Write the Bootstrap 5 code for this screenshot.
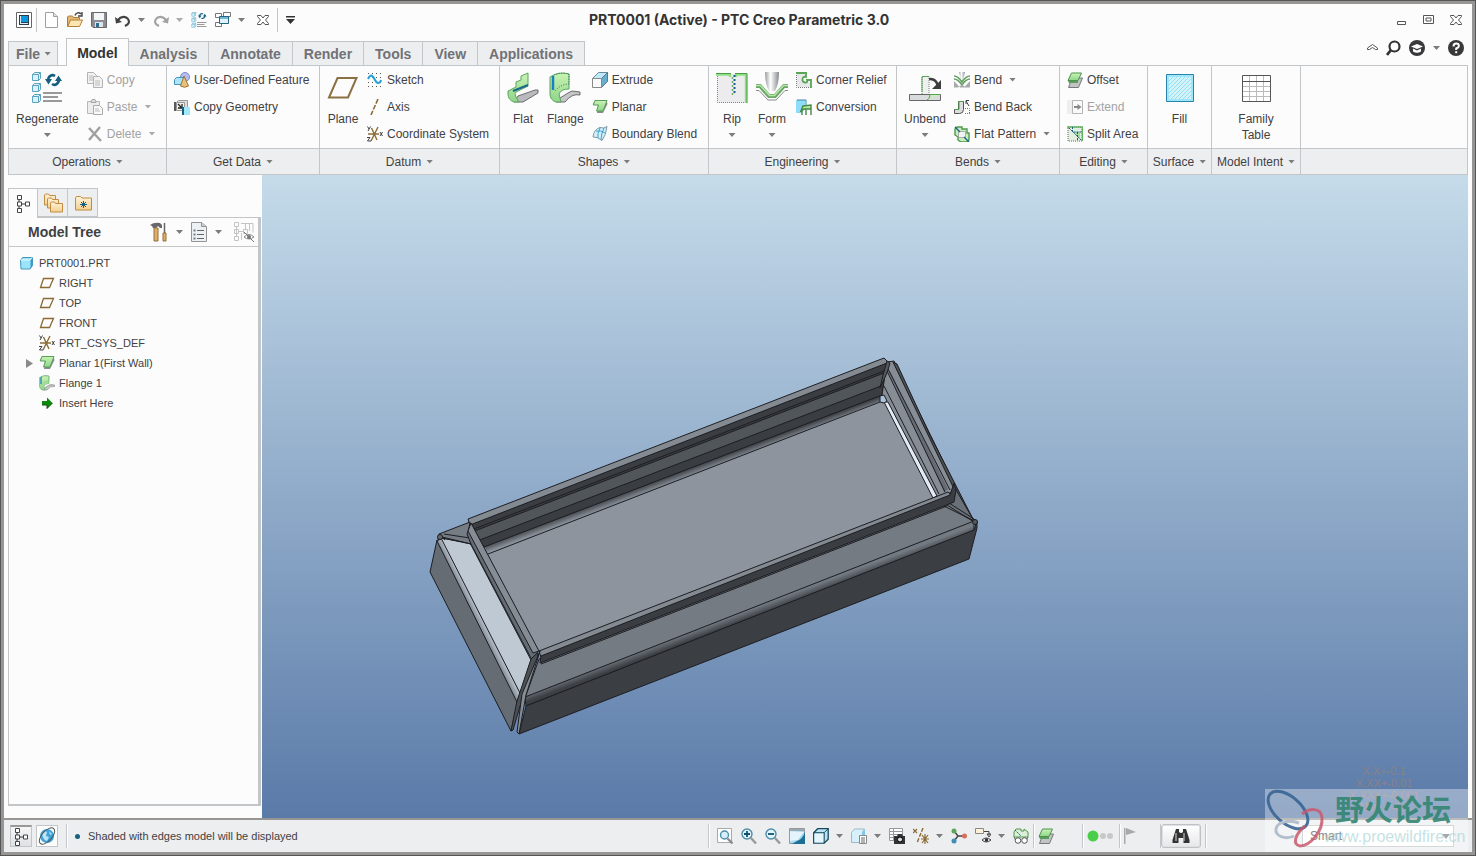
<!DOCTYPE html>
<html lang="en">
<head>
<meta charset="utf-8">
<meta name="viewport" content="width=device-width, initial-scale=1">
<title>PRT0001 (Active) - PTC Creo Parametric 3.0</title>
<link rel="stylesheet" href="https://cdn.jsdelivr.net/npm/bootstrap@5.3.0/dist/css/bootstrap.min.css">
<script src="https://cdn.jsdelivr.net/npm/bootstrap@5.3.0/dist/js/bootstrap.bundle.min.js"></script>
<style>
:root{--line:#c3c6c9;--pane:#edeef0;--ink:#414143;--paper:#fcfcfc}
body{font:12px/16px "Liberation Sans",Arial,sans-serif;color:var(--ink);background:var(--paper);border:1px solid #555;overflow:hidden}
.frame{border:3px solid #989694;min-height:0}
svg{display:block;flex:none}
button{border:0;background:none;padding:0;color:inherit;font:inherit}
.dn{width:7px;height:4px;background:#7c7c7c;clip-path:polygon(0 0,100% 0,50% 100%);flex:none}
.off{color:#a2a2a2}.off .dn{background:#aaa}
.heavy{font:700 14px/16px "Liberation Sans",Arial,sans-serif}
.doc-title{font:700 14px/16px Inter,"Liberation Sans",sans-serif;color:#333}
.titlebar{display:grid;grid-template-columns:1fr auto 1fr;height:34px;align-items:center;padding:0 10px 2px 12px}
.drop{gap:7px}
.vr-line{width:1px;height:24px;background:var(--line);flex:none}
.tabs{height:28px;padding:0 8px 0 4px;margin-bottom:-1px;position:relative;z-index:1}
.rtab{height:25px;padding:0 11px;background:var(--pane);border:solid var(--line);border-width:1px 0 1px 1px;color:#717276}
.rtab:last-child{border-right-width:1px}
.rtab.current{height:28px;padding:0 10px;background:var(--paper);border-width:1px 1px 0;color:#333;border-radius:1px}
.rtab.current+.rtab{border-left:0}
.file-tab{height:25px;padding:0 6px 0 7px;background:var(--pane);border:1px solid var(--line);color:#717276;margin-right:8px}
.ribbon{margin:0 4px;border:1px solid var(--line);display:grid;grid-template-columns:158px 153px 180px 209px 188px 163px 88px 64px 89px 1fr}
.grp{border-right:1px solid var(--line)}
.grp:last-child{border-right:0}
.grp-body{height:82px;padding-left:7px;gap:8px}
.grp-name{height:26px;border-top:1px solid var(--line);background:var(--pane);gap:5px}
.big{padding-top:6px;min-width:31px;gap:7px}
.big .dn{margin-top:-1px}
.cmd{height:27px;gap:4px;white-space:nowrap}
.cmd .dn{margin-left:3px}
.side{width:258px;padding:13px 1px 12px 4px}
.stab{width:30px;height:29px;background:var(--pane);border:1px solid var(--line);border-left-width:0}
.stab.current{height:30px;background:var(--paper);border-width:1px 1px 0}
.sidepanel{border:1px solid var(--line);border-right-width:3px;border-bottom-width:2px;margin-top:-1px}
.sidehead{height:29px;border-bottom:1px solid var(--line);padding:0 4px 0 19px}
.tree{font-size:11px;line-height:20px;padding:6px 0 0 10px}
.tree button{height:20px;gap:4px;white-space:nowrap}
.tree .kid{padding-left:20px}
.twist{width:20px}
.main-row{min-height:0}
.view{background:linear-gradient(#c5dbea,#5a7aa8);margin-right:4px;min-width:0}
.foot{height:34px;border-top:2px solid #989694;background:var(--pane);padding:0 18px 0 6px}
.foot .vr-line{box-shadow:1px 0 #fff}
.msg{font-size:11px}
.tog{width:22px;height:22px;border:1px solid var(--line);background:var(--paper)}
.tog.on{border-top:2px solid #999;background:linear-gradient(#f6f6f7,#dfe0e3)}
.tools{gap:8px}
.find{width:40px;height:24px;border:1px solid #bfc1c4;border-radius:3px;background:linear-gradient(#fff,#e6e7e9);box-shadow:0 0 0 1px #dfe0e2 inset}
.pick{width:152px;height:22px;border:1px solid #bfc1c4;border-radius:0;padding:0 20px 0 7px;font-size:12px;line-height:20px;color:var(--ink);background-color:#fff;background-position:right 3px center;background-size:8px 5px;--bs-form-select-bg-img:url("data:image/svg+xml,%3csvg xmlns='http://www.w3.org/2000/svg' viewBox='0 0 8 5'%3e%3cpath d='M0 0h8L4 5z' fill='%23777'/%3e%3c/svg%3e");margin-left:96px}
.stamp{position:absolute;right:4px;bottom:0;width:203px;height:63px;background:rgba(255,255,255,.36);pointer-events:none}
.stamp svg{position:absolute;left:0;top:0}
.stamp-cn{position:absolute;left:70px;top:1px;font:700 29px/36px "Noto Sans CJK SC",sans-serif;color:#338674;white-space:nowrap;opacity:.9}
.stamp-url{position:absolute;left:59px;top:38px;font:16px/20px "Liberation Sans",sans-serif;color:#9fd0d0;white-space:nowrap;opacity:.6}
.tol{font:11px/12px "Liberation Sans",sans-serif;fill:#8c8084;text-anchor:middle}
</style>
</head>
<body class="vh-100 d-flex flex-column m-0">
<svg width="0" height="0" class="position-absolute" aria-hidden="true">
<defs>
<linearGradient id="gBlue" x2="1" y2="1"><stop stop-color="#e6f8ff"/><stop offset="1" stop-color="#6fc0e4"/></linearGradient>
<linearGradient id="gGreen" x2="0" y2="1"><stop stop-color="#c9f3b4"/><stop offset="1" stop-color="#8fd588"/></linearGradient>
<linearGradient id="gSteel" x2="1" y2="0"><stop stop-color="#9a9ca0"/><stop offset=".4" stop-color="#fff"/><stop offset="1" stop-color="#888a90"/></linearGradient>
<linearGradient id="gFold" x2="0" y2="1"><stop stop-color="#fff3d8"/><stop offset="1" stop-color="#f3cf91"/></linearGradient>
</defs>
<symbol id="app" viewBox="0 0 16 16"><path d="M.5.500h15v15H.5z" fill="#fff" stroke="#666"/><path d="M3 3h10v10H3z" fill="#2a3d4c"/><path d="M5 4h7v6H5z" fill="#0a99dc"/><path d="M4 4h1v8H4zM5 11h7v1H5z" fill="#d7eefa"/></symbol>
<symbol id="new" viewBox="0 0 14 16"><path d="M.5.5h8l4 4v11H.5z" fill="#fff" stroke="#9aa0a4"/><path d="M8.500.5v4h4" fill="#ddd" stroke="#9aa0a4"/></symbol>
<symbol id="open" viewBox="0 0 16 16"><path d="M.5 14.500V5l1-1h4l1 1.500h6v2" fill="#e2b877" stroke="#a87c3c"/><path d="M3.500 8h12l-3 6.500H.8z" fill="#ffe5b0" stroke="#b1803a"/><path d="M8 3.500C9 .5 12 0 14 2M15 0v4h-4" fill="none" stroke="#444" stroke-width="1.400"/></symbol>
<symbol id="save" viewBox="0 0 16 16"><path d="M.5.5h15v15H2l-1.500-1.500z" fill="#8b8d90" stroke="#66686b"/><path d="M3 1h10v7H3z" fill="#f4f5f6"/><path d="M4 10h8v5H4z" fill="#dfe4e8"/><path d="M5 11h3v4H5z" fill="#2b6f93"/></symbol>
<symbol id="undo" viewBox="0 0 16 16"><path d="M3 8C6 4 11 4 13 7s1 5-3 7" fill="none" stroke="currentColor" stroke-width="2.200"/><path d="M0 5l1 6.500L7 10z" fill="currentColor"/></symbol>
<symbol id="redo" viewBox="0 0 16 16"><path d="M13 8C10 4 5 4 3 7s-1 5 3 7" fill="none" stroke="currentColor" stroke-width="2.200"/><path d="M16 5l-1 6.500L9 10z" fill="currentColor"/></symbol>
<symbol id="regen" viewBox="0 0 32 32"><g stroke="#5ba3c0"><path d="M1.500 2.500h6v6h-6zM1.500 2.500l2-2h6v6l-2 2M7.500 2.500l2-2" fill="#d8f3fd"/><path d="M1.500 13.500h6v6h-6zM1.500 13.500l2-2h6v6l-2 2M7.500 13.500l2-2" fill="#d8f3fd"/><path d="M1.500 24.500h6v6h-6zM1.500 24.500l2-2h6v6l-2 2M7.500 24.500l2-2" fill="#d8f3fd"/></g><path d="M12 21h19M12 25h15M12 29h19" stroke="#999" stroke-width="2"/><path d="M17 9c0-5 4-7 7-5M28 7c0 5-4 7-7 5" fill="none" stroke="#156080" stroke-width="2.600"/><path d="M14 7h7l-3.500 5.500zM24 9h7l-3.500-5.500z" fill="#156080"/></symbol>
<symbol id="wins" viewBox="0 0 16 16"><g fill="#fff" stroke="#777"><path d="M.5 1.500h6v4h-6zM8.500.5h7v4h-7zM.5 10.500h6v4h-6z"/><path d="M4.500 4.500h9v7h-9z" fill="#dff3fb" stroke="#28637f"/></g><path d="M5 5h8v2H5z" fill="#6fb8d8"/></symbol>
<symbol id="x" viewBox="0 0 12 12"><path d="M.5 1.500h3.500l2 2.500 2-2.500h3.500v1L8.500 6l3 3.500v1H8L6 8l-2 2.500H.5v-1L3.500 6l-3-3.500z" fill="#fff" stroke="#555"/></symbol>
<symbol id="copy" viewBox="0 0 16 16"><g fill="#f2f2f2" stroke="#b3b3b3"><path d="M.5.5h6l3 3v8h-9z"/><path d="M6.500 4.500h6l3 3v8h-9z"/></g><path d="M2 4h4M2 6h4M2 8h4M8 9h5M8 11h5M8 13h5" stroke="#bbb"/></symbol>
<symbol id="paste" viewBox="0 0 16 16"><path d="M.5 2.500h12v12H.5z" fill="#ededed" stroke="#b8b8b8"/><path d="M4 3.500l1-3h3l1 3z" fill="#ddd" stroke="#aaa"/><path d="M6.500 6.500h6l3 3v6h-9z" fill="#fafafa" stroke="#aaa"/><path d="M8 10h4M8 12h5" stroke="#bbb"/></symbol>
<symbol id="del" viewBox="0 0 16 16"><path d="M2 2l12 13M13 1L2 14" stroke="#a0a0a0" stroke-width="2.400"/></symbol>
<symbol id="udf" viewBox="0 0 16 16"><circle cx="11" cy="5" r="4.500" fill="#b4bdf0" stroke="#8088bd"/><path d="M.5 7.500l2-2h8v7h-10z" fill="#a9e4fa" stroke="#4695b8"/><path d="M10 4l4.500 10q-4 2.500-8 0z" fill="#e8c27d" stroke="#9c7430"/></symbol>
<symbol id="cgeo" viewBox="0 0 16 16"><path d="M2.500 3.500l2-2h9v8" fill="#ddd" stroke="#999"/><path d="M2.500 3.500h8v8h-8z" fill="#eee" stroke="#999"/><path d="M0 3h2v9H0z" fill="#5a5a5a"/><path d="M4 5l3 3M8 5v4H4" stroke="#222" fill="none" stroke-width="1.300"/><path d="M8 8h8v8H8z" fill="#a4e7fa"/><path d="M8 8h2v8H8z" fill="#17607f"/></symbol>
<symbol id="planeL" viewBox="0 0 32 32"><path d="M10.500 6h19l-8.500 19.500H2z" fill="none" stroke="#8c7043" stroke-width="2"/></symbol>
<symbol id="sketch" viewBox="0 0 16 16"><path d="M1 1.500h14M1 5.500h14M1 10.500h14M1 14.500h14" stroke="#555" stroke-dasharray="1 3"/><path d="M1 7C4 1 6 4 8 8s5 4 6 0" fill="none" stroke="#27a0d8" stroke-width="2"/></symbol>
<symbol id="axis" viewBox="0 0 16 16"><path d="M11 0L4 16" stroke="#8c6c36" stroke-width="1.600" stroke-dasharray="5 1.500"/></symbol>
<symbol id="csys" viewBox="0 0 16 16"><path d="M1 8h11M4.500 2l5.500 12M11 1L4 15" stroke="#8c6c36" stroke-width="1.400"/><path d="M.5.500L2 3M3.500.5L1 5M0 11.500h3L.5 15H4M13 6l2.500 4M15.500 6L13 10" stroke="#444" fill="none"/></symbol>
<symbol id="flat" viewBox="0 0 32 32"><path d="M11 24l17-6h3v3l-15 9H7z" fill="#b9babd" stroke="#6d6d70"/><path d="M1 19l8-4v-5l5-2V4l7-3v13L9 20q-2 1 0 5l3 5H7q-6-2-6-8z" fill="url(#gGreen)" stroke="#5da35f"/><path d="M6 19l15-6" stroke="#176a88" stroke-width="2"/></symbol>
<symbol id="flange" viewBox="0 0 32 32"><path d="M11 26l8-5 4-2 8 1v3q-8-2-15 7H7z" fill="#c4c5c8" stroke="#6d6d70"/><path d="M1 5Q10-1 20 2v15q-8 0-10 5l2 8H7q-6-2-6-8z" fill="url(#gGreen)" stroke="#5da35f"/><path d="M4 18V4" stroke="#1681c4" stroke-width="2.500"/><path d="M5 3q7-3 15-1v10q-8 0-14 7" fill="none" stroke="#276f5a" stroke-dasharray="1 1.500"/></symbol>
<symbol id="extr" viewBox="0 0 16 16"><path d="M.5 6.500l6-6h9l-6 6z" fill="#bfe8f8" stroke="#6c8796"/><path d="M9.500 6.500l6-6v9l-6 6z" fill="#69aece" stroke="#5d7888"/><path d="M.5 6.500h9v9h-9z" fill="#fafafa" stroke="#888"/></symbol>
<symbol id="planar" viewBox="0 0 16 16"><path d="M1 5h5L5 14h6l4.500-9-1-3.500H3z" fill="#8a8c8e"/><path d="M3 1.500h12l-4 10.500H4.500l2-6H1.200z" fill="url(#gGreen)" stroke="#5a9d5b"/></symbol>
<symbol id="blend" viewBox="0 0 16 16"><path d="M1 11Q2 3 8 1.500q4 1.500 7-1-1 9-5 14-5-4-9-3.500z" fill="#d4effa" stroke="#7c98a6"/><path d="M4 5q5-1 9 2M8 2Q5 8 6 12M12 2q-3 6-3 12" fill="none" stroke="#3ea0cc"/></symbol>
<symbol id="rip" viewBox="0 0 32 32"><path d="M1 2h30v29H1z" fill="#ececee"/><path d="M1.500 2v28.500H30" fill="none" stroke="#888" stroke-dasharray="1 1"/><path d="M0 2.500h14V5M30 31V2.500H20V5" fill="none" stroke="#8ddf82" stroke-width="2.400"/><path d="M0 1.500h15M19 1.500h12V31" fill="none" stroke="#4b9a4b"/><path d="M16.500 5v19" stroke="#75a86e" stroke-width="1.500" stroke-dasharray="2 2"/><path d="M18.500 3v20" stroke="#14628c" stroke-width="2" stroke-dasharray="2 2"/></symbol>
<symbol id="form" viewBox="0 0 32 32"><path d="M9 0h14q0 12-4 19h-6Q9 12 9 0z" fill="url(#gSteel)"/><path d="M0 14h4l9 10h6l9-10h4" fill="none" stroke="#69a668" stroke-width="4"/><path d="M0 13.500h4.500l9 10h5l9-10H32" fill="none" stroke="#b7e8a8" stroke-width="1.500"/><path d="M0 18.500h3l9 9.500h8l9-9.500h3" fill="none" stroke="#888"/></symbol>
<symbol id="relief" viewBox="0 0 16 16"><path d="M1 1h9v5H7v4h8v5H1z" fill="#e8e8ea"/><path d="M.5 1v14.500H15" fill="none" stroke="#777" stroke-dasharray="1 1"/><path d="M0 1h10v4q-3-1-3.500 2T9 10.500 11 8h4v8" fill="none" stroke="#58a556" stroke-width="1.800"/></symbol>
<symbol id="conv" viewBox="0 0 16 16"><path d="M0 1h9v9l-4 4H0z" fill="#8edcf8"/><path d="M1 1h9v6" fill="none" stroke="#3c87a8"/><path d="M7 7l8-1v4H8l-3 2zM6 9v7M10 10v6M15 7v9" fill="#b5e7a6" stroke="#468846" stroke-width="1.400"/></symbol>
<symbol id="unbend" viewBox="0 0 32 32"><path d="M13 22V4.500h7V22" fill="#f0f0f1" stroke="#777" stroke-dasharray="1 1"/><path d="M13 4.500h7M13 5v15" stroke="#58a556"/><path d="M.5 22.500h31v6H.5z" fill="#dadbdd" stroke="#666"/><path d="M18 28q3-1 3-5.500h10.500" fill="#cde9c5" stroke="#55a352"/><path d="M20 7q7-1 9 7" fill="none" stroke="#3e3e40" stroke-width="2.500"/><path d="M32 8v9h-9z" fill="#3e3e40"/></symbol>
<symbol id="bend" viewBox="0 0 16 16"><path d="M5 0h6l-2 8H7z" fill="url(#gSteel)"/><path d="M0 4q4 0 8 6 4-6 8-6M0 7q4 0 8 6 4-6 8-6" fill="none" stroke="#68a165" stroke-width="1.500"/><path d="M0 9l6 6.500H0zM16 9l-6 6.500h6zM4 15.500h8l-4-3z" fill="#a8a9ab"/></symbol>
<symbol id="bback" viewBox="0 0 16 16"><path d="M.5 10.500h4v-8h5v8q0 4-4 4h-5z" fill="#dcdddf" stroke="#555"/><path d="M1 10.500h4v-8h5" fill="none" stroke="#4ea24c"/><path d="M11 14.500h5M15.500 14V9.500H11" stroke="#777" fill="none" stroke-dasharray="1 1"/><path d="M12 2l3 5M12 5V1.500h3" fill="none" stroke="#444"/></symbol>
<symbol id="fpat" viewBox="0 0 16 16"><path d="M1 3l2-2h5v2h5v4h2v7l-2 2H7l-3-2v-3L1 9z" fill="#c9edbd" stroke="#4f9a4d" stroke-width="1.400"/><path d="M4.500 5.500h7v6h-7z" fill="#f2f2f2" stroke="#777" stroke-dasharray="1 1"/><path d="M1 1l5 5M10 11l5 5" stroke="#14628c" stroke-width="1.300"/></symbol>
<symbol id="offs" viewBox="0 0 16 16"><path d="M5 6h10.500l-4 9.500H1.500z" fill="#c2c3c5" stroke="#77797b"/><path d="M4.500 1h10l-3.500 7.500H1z" fill="url(#gGreen)" stroke="#4f914e"/><path d="M1 9h10v2H2z" fill="#5a9d59"/></symbol>
<symbol id="extend" viewBox="0 0 16 16"><path d="M0 1h5v14H0z" fill="#eee"/><path d="M5.500 1.500h10v13h-10z" fill="#fafafa" stroke="#b5b5b5"/><path d="M7 8h4" stroke="#888" stroke-width="2"/><path d="M10.500 5l4 3-4 3z" fill="#888"/></symbol>
<symbol id="split" viewBox="0 0 16 16"><path d="M1 1h14v14H1z" fill="#e3eee0" stroke="#666" stroke-dasharray="1 1"/><path d="M0 1h15.500v14" fill="none" stroke="#62b560" stroke-width="1.500"/><path d="M3 3l10 10V6H6" fill="#a9dd9c"/><path d="M2 2l12 12M5.500 1v5h10M10.500 6v9" stroke="#175f80" fill="none" stroke-dasharray="2 1"/></symbol>
<symbol id="fill" viewBox="0 0 32 32"><path d="M2.500 2.500h27v27h-27z" fill="#9de6fb" stroke="#2883a8"/><path d="M5 5h22v22H5z" fill="#d4f3fb"/><path d="M5 9l4-4M5 13l8-8M5 17L17 5M5 21L21 5M5 25L25 5M7 27L27 7M11 27l16-16M15 27l12-12M19 27l8-8M23 27l4-4" stroke="#92dcf2"/></symbol>
<symbol id="table" viewBox="0 0 32 32"><path d="M2.500 3.500h28v26h-28z" fill="#fff"/><path d="M9.500 4v25M16.500 4v25M23.500 4v25M3 14.500h27M3 19.500h27M3 24.500h27" stroke="#bbb"/><path d="M2.500 3.500h28v26h-28zM2.500 9.500h28" fill="none" stroke="#555"/></symbol>
<symbol id="plane" viewBox="0 0 16 16"><path d="M4.500 3.500h10l-4 9h-9z" fill="none" stroke="#8a6a34" stroke-width="1.300"/></symbol>
<symbol id="part" viewBox="0 0 16 16"><path d="M1.500 5.500l2-3h10v8l-2.500 3.500H2z" fill="#9be4fb" stroke="#4696ba"/><path d="M11 5.500h.5V14l2-3.500v-8z" fill="#3d9bca"/><path d="M2 5h9l2-2.500" stroke="#eafaff" fill="none"/></symbol>
<symbol id="tree" viewBox="0 0 16 20"><path d="M4 5v10M6 10h5" stroke="#333"/><path d="M2.500 1.500h4v4h-4zM2.500 8h4v4h-4zM10.500 8h4v4h-4zM2.500 14.500h4v4h-4z" fill="#fff" stroke="#444"/></symbol>
<symbol id="folders" viewBox="0 0 20 20"><g fill="url(#gFold)" stroke="#c08c42"><path d="M1.500 12V2l1-1h3l1 1.500h6V12z"/><path d="M4.500 15V6l1-1h3l1 1.500h6V15z"/><path d="M7.500 19v-9l1-1h3l1 1.500h7V19z"/></g></symbol>
<symbol id="fav" viewBox="0 0 20 20"><path d="M2.500 17V5l1-1.500h4L9 5h9.500v12z" fill="url(#gFold)" stroke="#c08c42"/><path d="M10.500 8v7M7 11.500h7M8 9l5 5M13 9l-5 5" stroke="#17607f"/></symbol>
<symbol id="hammer" viewBox="0 0 18 20"><path d="M0 3q4-3 10-2l2 2v3h-2L8 4 6 6H3L2 4z" fill="#66686b"/><path d="M4 6h4v13H4z" fill="#dfae68" stroke="#94703a"/><path d="M14.500 1v10" stroke="#666" stroke-width="1.500"/><path d="M13 11h3v8h-3z" fill="#dfae68" stroke="#94703a"/></symbol>
<symbol id="list" viewBox="0 0 16 20"><path d="M.5.5h10l5 4v15H.5z" fill="#eef1f4" stroke="#929598"/><path d="M10.500.5v4h5" fill="#ccc" stroke="#929598"/><path d="M6 8.500h7M6 12.500h7M6 16.500h7" stroke="#666"/><path d="M2.500 7.500h2v2h-2zM2.500 11.500h2v2h-2zM2.500 15.500h2v2h-2z" fill="#6a7e8a"/></symbol>
<symbol id="thide" viewBox="0 0 20 20"><g fill="none" stroke="#c4c4c4"><path d="M.5.5h4v4h-4zM.5 7.500h4v4h-4zM.5 14.500h4v4h-4zM9.500 7.500h4v4h-4zM2.500 4.500v10M4.500 9.500h5M7 1.500h12v9M11.500 2v5M15.500 2v7M7.500 11v7"/></g><path d="M10 15q5-5 10 0-5 4-10 0z" fill="#fff" stroke="#888"/><circle cx="15" cy="15" r="2" fill="#777"/><path d="M10 10l10 10" stroke="#777"/></symbol>
<symbol id="ins" viewBox="0 0 16 16"><path d="M3 6h5V2.500L13.500 8 8 13.500V10H3z" fill="#0c8a0c"/><path d="M3 10h5v3.500L13.500 8" fill="none" stroke="#124f12"/></symbol>
<symbol id="globe" viewBox="0 0 18 18"><circle cx="9" cy="9" r="7" fill="#3ba3d8"/><path d="M4 7q3-4 5-2l-1 4 3 1-2 4q-4-1-5-7zM11 4l3 3-2 1z" fill="#bde4f5"/><ellipse cx="9" cy="9" rx="10" ry="5" transform="rotate(-48 9 9)" fill="none" stroke="#555"/></symbol>
<symbol id="zfit" viewBox="0 0 16 16"><path d="M.5.5h14v14H.5z" fill="#fff" stroke="#aaa"/><circle cx="7.500" cy="7" r="4" fill="#d4effb" stroke="#4f8ca8" stroke-width="1.400"/><path d="M10.500 10.500l5 5" stroke="#8b8d8f" stroke-width="2.400"/></symbol>
<symbol id="zin" viewBox="0 0 16 16"><circle cx="6" cy="6" r="5" fill="#e0f4fc" stroke="#4f8ca8" stroke-width="1.400"/><path d="M9.500 9.500l5.500 6" stroke="#999" stroke-width="2.400"/><path d="M3 6h6M6 3v6" stroke="#12516e" stroke-width="1.800"/></symbol>
<symbol id="zout" viewBox="0 0 16 16"><circle cx="6" cy="6" r="5" fill="#e0f4fc" stroke="#4f8ca8" stroke-width="1.400"/><path d="M9.500 9.500l5.500 6" stroke="#999" stroke-width="2.400"/><path d="M3 6h6" stroke="#12516e" stroke-width="1.800"/></symbol>
<symbol id="paint" viewBox="0 0 16 16"><path d="M.5.5h15v15H.5z" fill="url(#gBlue)" stroke="#999"/><path d="M1 4h14L9 12l-8 1z" fill="#e4f4fa"/><path d="M16 4v12H3l5-3q6-2 8-9z" fill="#1e6f96"/><path d="M1 1h14v2H1z" fill="#9aa8af"/></symbol>
<symbol id="cube" viewBox="0 0 16 16"><path d="M.7 4.700l4-4h10.500v10.500l-4 4H.7z" fill="#b9e3f5" stroke="#17485d" stroke-width="1.300"/><path d="M1.500 5.500h9v9h-9z" fill="#e4f6fc"/><path d="M.7 4.700h10.500v10.500M11.200 4.700l4-4" fill="none" stroke="#17485d"/></symbol>
<symbol id="cubes" viewBox="0 0 16 16"><path d="M.5 4.500l3-3.500h10l-2 3.500v10H.5z" fill="#d6f1fb" stroke="#9db8c4"/><path d="M11 4.500l3-3v8l-3 4z" fill="#80c8e8"/><path d="M8.500 7.500h7v8h-7z" fill="#fff" stroke="#888"/><path d="M10 10h4M10 12h4M10 14h4" stroke="#666"/></symbol>
<symbol id="cam" viewBox="0 0 16 16"><path d="M.5.500h13v12H.5z" fill="#fff" stroke="#999"/><path d="M1 3.500h12M1 6.500h12M1 9.500h12M4.500 1v12" stroke="#999"/><path d="M5 8h3l1-2h4l1 2h2v8H5z" fill="#333"/><circle cx="11" cy="11.500" r="2.500" fill="#ddd" stroke="#000"/></symbol>
<symbol id="datum" viewBox="0 0 16 16"><path d="M0 1l4 4M4 1L0 5M12 6v10M8 11h8M9 7l6 8M15 7l-6 8" stroke="#8a6a34" stroke-width="1.200" fill="none"/><path d="M10 0L4 15" stroke="#8a6a34" stroke-width="1.400" stroke-dasharray="4 1.500"/></symbol>
<symbol id="spin" viewBox="0 0 16 16"><path d="M3 3l4 5-4 5M7 8h6" fill="none" stroke="#444" stroke-width="1.500"/><circle cx="3" cy="3" r="2.500" fill="#5ba65a"/><circle cx="3" cy="13" r="2.500" fill="#3d8fb8"/><circle cx="13.500" cy="8" r="2.500" fill="#d86d5d"/></symbol>
<symbol id="anno" viewBox="0 0 16 16"><path d="M.5.5h8v5h-8z" fill="#fdf2d8" stroke="#888"/><path d="M9 3.500h5V7M12 6l2 3 2-3z" stroke="#444" fill="none"/><path d="M7 12q4-4 9 0-5 4-9 0z" fill="#eee" stroke="#444"/><circle cx="11.500" cy="12" r="1.700" fill="#333"/></symbol>
<symbol id="fpv" viewBox="0 0 16 16"><path d="M1 4l2-3h5v2h3V1l4 3v5H1z" fill="#dceed6" stroke="#4f9a4d"/><path d="M2 2l6 6" stroke="#14628c" stroke-dasharray="2 1"/><path d="M1 9l2 4M15 9l-2 4" stroke="#666"/><circle cx="5" cy="12.500" r="2.800" fill="#fff" stroke="#555"/><circle cx="11.500" cy="12.500" r="2.800" fill="#fff" stroke="#555"/></symbol>
<symbol id="bino" viewBox="0 0 18 16"><path d="M4 1h3v3l1.500 1h1L11 4V1h3l1 3 2.500 8v3h-6v-5h-5v5H.5v-3L3 4z" fill="#333"/><path d="M4 5v8M12 5v8" stroke="#aaa" stroke-width="1.400"/></symbol>
</svg>

<div class="frame flex-grow-1 d-flex flex-column position-relative">
<header>
  <div class="titlebar">
    <div class="d-flex align-items-center">
      <button aria-label="Window"><svg width="16" height="16"><use href="#app"/></svg></button>
      <i class="vr-line ms-1 me-2"></i>
      <button class="me-2" aria-label="New"><svg width="14" height="16"><use href="#new"/></svg></button>
      <button class="me-2" aria-label="Open"><svg width="16" height="16"><use href="#open"/></svg></button>
      <button class="me-2" aria-label="Save"><svg width="16" height="16"><use href="#save"/></svg></button>
      <button class="d-flex align-items-center drop me-2" aria-label="Undo"><svg width="16" height="16"><use href="#undo"/></svg><i class="dn"></i></button>
      <button class="d-flex align-items-center drop me-2 off" aria-label="Redo"><svg width="16" height="16"><use href="#redo"/></svg><i class="dn"></i></button>
      <button class="me-2" aria-label="Regenerate"><svg width="16" height="16"><use href="#regen"/></svg></button>
      <button class="d-flex align-items-center drop me-2" aria-label="Windows"><svg width="16" height="16"><use href="#wins"/></svg><i class="dn"></i></button>
      <button class="ms-1" aria-label="Close"><svg width="12" height="12"><use href="#x"/></svg></button>
      <i class="vr-line mx-2"></i>
      <button aria-label="Customize toolbar"><svg width="9" height="8" viewBox="0 0 9 8"><path d="M0 0h9v1.500H0zM0 3h9L4.500 8z" fill="#333"/></svg></button>
    </div>
    <h1 class="doc-title m-0">PRT0001 (Active) - PTC Creo Parametric 3.0</h1>
    <div class="d-flex align-items-center justify-content-end gap-3">
      <button aria-label="Minimize"><svg width="10" height="12" viewBox="0 0 10 12"><path d="M.5 7.500h8v3h-8z" fill="#fff" stroke="#555"/></svg></button>
      <button aria-label="Restore"><svg width="11" height="10" viewBox="0 0 11 10"><path d="M.5.5h10v8H.5zM3 3h5v3H3z" fill="#fff" stroke="#555"/></svg></button>
      <button aria-label="Close window"><svg width="12" height="12"><use href="#x"/></svg></button>
    </div>
  </div>
  <div class="tabs d-flex align-items-end">
    <button class="file-tab heavy d-flex align-items-center gap-1">File<i class="dn"></i></button>
    <nav class="d-flex align-items-end" aria-label="Ribbon">
      <button class="rtab current heavy">Model</button><button class="rtab heavy">Analysis</button><button class="rtab heavy">Annotate</button><button class="rtab heavy">Render</button><button class="rtab heavy">Tools</button><button class="rtab heavy">View</button><button class="rtab heavy">Applications</button>
    </nav>
    <div class="ms-auto d-flex align-items-center gap-2 align-self-start">
      <button aria-label="Minimize ribbon"><svg width="11" height="8" viewBox="0 0 11 8"><path d="M.5 4l5-3.500 5 3.500v1.500h-2l-3-2-3 2h-2z" fill="#fff" stroke="#555"/></svg></button>
      <button aria-label="Search"><svg width="15" height="20" viewBox="0 -2 15 20"><circle cx="8.500" cy="6.500" r="5" fill="#fff" stroke="#333" stroke-width="2.200"/><path d="M5 10l-4 5" stroke="#333" stroke-width="2.800"/></svg></button>
      <button class="d-flex align-items-center gap-2" aria-label="Learning"><svg width="16" height="16" viewBox="0 0 16 16"><circle cx="8" cy="8" r="8" fill="#39393b"/><path d="M2 6.500L8 4l6 2.500L8 9z" fill="#fff"/><path d="M4 8.500l4 2 4-2v3q-4 2.500-8 0z" fill="#fff"/></svg><i class="dn"></i></button>
      <button aria-label="Help"><svg width="16" height="16" viewBox="0 0 16 16"><circle cx="8" cy="8" r="8" fill="#39393b"/><path d="M5.500 6.500q0-3 2.700-3t2.700 2.400q0 1.400-2.700 2.600v1.500" fill="none" stroke="#fff" stroke-width="2"/><path d="M7.200 11.200h2v2h-2z" fill="#fff"/></svg></button>
    </div>
  </div>
  <div class="ribbon">
    <section class="grp"><div class="grp-body d-flex">
      <button class="big d-flex flex-column align-items-center"><svg width="32" height="32"><use href="#regen"/></svg>Regenerate<i class="dn"></i></button>
      <div><button class="cmd off d-flex align-items-center" disabled><svg width="16" height="16"><use href="#copy"/></svg>Copy</button><button class="cmd off d-flex align-items-center" disabled><svg width="16" height="16"><use href="#paste"/></svg>Paste<i class="dn"></i></button><button class="cmd off d-flex align-items-center" disabled><svg width="16" height="16"><use href="#del"/></svg>Delete<i class="dn"></i></button></div>
    </div><button class="grp-name w-100 d-flex align-items-center justify-content-center">Operations<i class="dn"></i></button></section>
    <section class="grp"><div class="grp-body d-flex">
      <div><button class="cmd d-flex align-items-center"><svg width="16" height="16"><use href="#udf"/></svg>User-Defined Feature</button><button class="cmd d-flex align-items-center"><svg width="16" height="16"><use href="#cgeo"/></svg>Copy Geometry</button></div>
    </div><button class="grp-name w-100 d-flex align-items-center justify-content-center">Get Data<i class="dn"></i></button></section>
    <section class="grp"><div class="grp-body d-flex">
      <button class="big d-flex flex-column align-items-center"><svg width="32" height="32"><use href="#planeL"/></svg>Plane</button>
      <div><button class="cmd d-flex align-items-center"><svg width="16" height="16"><use href="#sketch"/></svg>Sketch</button><button class="cmd d-flex align-items-center"><svg width="16" height="16"><use href="#axis"/></svg>Axis</button><button class="cmd d-flex align-items-center"><svg width="16" height="16"><use href="#csys"/></svg>Coordinate System</button></div>
    </div><button class="grp-name w-100 d-flex align-items-center justify-content-center">Datum<i class="dn"></i></button></section>
    <section class="grp"><div class="grp-body d-flex">
      <button class="big d-flex flex-column align-items-center"><svg width="32" height="32"><use href="#flat"/></svg>Flat</button>
      <button class="big d-flex flex-column align-items-center"><svg width="32" height="32"><use href="#flange"/></svg>Flange</button>
      <div><button class="cmd d-flex align-items-center"><svg width="16" height="16"><use href="#extr"/></svg>Extrude</button><button class="cmd d-flex align-items-center"><svg width="16" height="16"><use href="#planar"/></svg>Planar</button><button class="cmd d-flex align-items-center"><svg width="16" height="16"><use href="#blend"/></svg>Boundary Blend</button></div>
    </div><button class="grp-name w-100 d-flex align-items-center justify-content-center">Shapes<i class="dn"></i></button></section>
    <section class="grp"><div class="grp-body d-flex">
      <button class="big d-flex flex-column align-items-center"><svg width="32" height="32"><use href="#rip"/></svg>Rip<i class="dn"></i></button>
      <button class="big d-flex flex-column align-items-center"><svg width="32" height="32"><use href="#form"/></svg>Form<i class="dn"></i></button>
      <div><button class="cmd d-flex align-items-center"><svg width="16" height="16"><use href="#relief"/></svg>Corner Relief</button><button class="cmd d-flex align-items-center"><svg width="16" height="16"><use href="#conv"/></svg>Conversion</button></div>
    </div><button class="grp-name w-100 d-flex align-items-center justify-content-center">Engineering<i class="dn"></i></button></section>
    <section class="grp"><div class="grp-body d-flex">
      <button class="big d-flex flex-column align-items-center"><svg width="32" height="32"><use href="#unbend"/></svg>Unbend<i class="dn"></i></button>
      <div><button class="cmd d-flex align-items-center"><svg width="16" height="16"><use href="#bend"/></svg>Bend<i class="dn"></i></button><button class="cmd d-flex align-items-center"><svg width="16" height="16"><use href="#bback"/></svg>Bend Back</button><button class="cmd d-flex align-items-center"><svg width="16" height="16"><use href="#fpat"/></svg>Flat Pattern<i class="dn"></i></button></div>
    </div><button class="grp-name w-100 d-flex align-items-center justify-content-center">Bends<i class="dn"></i></button></section>
    <section class="grp"><div class="grp-body d-flex">
      <div><button class="cmd d-flex align-items-center"><svg width="16" height="16"><use href="#offs"/></svg>Offset</button><button class="cmd off d-flex align-items-center" disabled><svg width="16" height="16"><use href="#extend"/></svg>Extend</button><button class="cmd d-flex align-items-center"><svg width="16" height="16"><use href="#split"/></svg>Split Area</button></div>
    </div><button class="grp-name w-100 d-flex align-items-center justify-content-center">Editing<i class="dn"></i></button></section>
    <section class="grp"><div class="grp-body d-flex justify-content-center ps-0">
      <button class="big d-flex flex-column align-items-center"><svg width="32" height="32"><use href="#fill"/></svg>Fill</button>
    </div><button class="grp-name w-100 d-flex align-items-center justify-content-center">Surface<i class="dn"></i></button></section>
    <section class="grp"><div class="grp-body d-flex justify-content-center ps-0">
      <button class="big d-flex flex-column align-items-center"><svg width="32" height="32"><use href="#table"/></svg><span>Family<br>Table</span></button>
    </div><button class="grp-name w-100 d-flex align-items-center justify-content-center">Model Intent<i class="dn"></i></button></section>
    <section class="grp"><div class="grp-body"></div><div class="grp-name"></div></section>
  </div>
</header>

<main class="main-row flex-grow-1 d-flex">
  <aside class="side d-flex flex-column flex-shrink-0">
    <div class="d-flex position-relative z-1 align-items-start">
      <button class="stab current d-flex align-items-center justify-content-center" aria-label="Model Tree"><svg width="16" height="20"><use href="#tree"/></svg></button>
      <button class="stab d-flex align-items-center justify-content-center" aria-label="Folder Browser"><svg width="20" height="20"><use href="#folders"/></svg></button>
      <button class="stab d-flex align-items-center justify-content-center" aria-label="Favorites"><svg width="20" height="20"><use href="#fav"/></svg></button>
    </div>
    <div class="sidepanel flex-grow-1">
      <div class="sidehead d-flex align-items-center">
        <h2 class="heavy m-0 me-auto">Model Tree</h2>
        <button class="d-flex align-items-center gap-2 me-2" aria-label="Settings"><svg width="18" height="20"><use href="#hammer"/></svg><i class="dn"></i></button>
        <button class="d-flex align-items-center gap-2 me-1" aria-label="Show"><svg width="16" height="20"><use href="#list"/></svg><i class="dn"></i></button>
        <button class="ms-2" aria-label="Hide"><svg width="20" height="20"><use href="#thide"/></svg></button>
      </div>
      <ul class="tree list-unstyled m-0">
        <li><button class="d-flex align-items-center"><svg width="16" height="16"><use href="#part"/></svg>PRT0001.PRT</button></li>
        <li class="kid"><button class="d-flex align-items-center"><svg width="16" height="16"><use href="#plane"/></svg>RIGHT</button></li>
        <li class="kid"><button class="d-flex align-items-center"><svg width="16" height="16"><use href="#plane"/></svg>TOP</button></li>
        <li class="kid"><button class="d-flex align-items-center"><svg width="16" height="16"><use href="#plane"/></svg>FRONT</button></li>
        <li class="kid"><button class="d-flex align-items-center"><svg width="16" height="16"><use href="#csys"/></svg>PRT_CSYS_DEF</button></li>
        <li class="d-flex"><button class="twist d-flex align-items-center justify-content-center" aria-label="Expand"><svg width="7" height="9" viewBox="0 0 7 9"><path d="M0 0l7 4.500L0 9z" fill="#8a8a8a"/></svg></button><button class="d-flex align-items-center"><svg width="16" height="16"><use href="#planar"/></svg>Planar 1(First Wall)</button></li>
        <li class="kid"><button class="d-flex align-items-center"><svg width="16" height="16"><use href="#flange"/></svg>Flange 1</button></li>
        <li class="kid"><button class="d-flex align-items-center"><svg width="16" height="16"><use href="#ins"/></svg>Insert Here</button></li>
      </ul>
    </div>
  </aside>

  <section class="view flex-grow-1" aria-label="Graphics window">
    <svg class="w-100 h-100" viewBox="262 175 1206 643" preserveAspectRatio="xMinYMin" role="img" aria-label="Shaded sheet metal tray">
      <defs>
        <linearGradient id="fl" gradientUnits="userSpaceOnUse" x1="474" y1="622" x2="482" y2="618"><stop stop-color="#6b727a"/><stop offset="1" stop-color="#b8c2ce"/></linearGradient>
        <linearGradient id="ff" gradientUnits="userSpaceOnUse" x1="748" y1="610" x2="751" y2="618"><stop stop-color="#737a81"/><stop offset="1" stop-color="#3c3f44"/></linearGradient>
        <linearGradient id="fb" gradientUnits="userSpaceOnUse" x1="681" y1="471" x2="684" y2="479"><stop stop-color="#3a3d42"/><stop offset="1" stop-color="#8d949d"/></linearGradient>
      </defs>
      <g stroke="#1d1e22" stroke-width="1" stroke-linejoin="round">
        <!-- floor and back wall -->
        <path d="M485 548L882 394l5 10 50 93-397 155z" fill="#8d949d" stroke="none"/>
        <path d="M484 545L882 391l-1 10L488 554z" fill="url(#fb)" stroke="none"/>
        <path d="M488 554L880 402" fill="none"/>
        <path d="M468 519L884 358l4 4-2 3L470 526z" fill="#838a92"/>
        <path d="M470 525L887 363l-5 32-398 152z" fill="#3a3d42"/>
        <path d="M472 532L884 373l-3 13L477 541z" fill="#50565a"/>
        <path d="M474 529L884 371" fill="none"/>
        <!-- right wall -->
        <path d="M887 362l7-1 60 122 2 8-19 6-55-102z" fill="#868d95"/>
        <path d="M887 369l4 4 57 116-4 3z" fill="#666b73" stroke="none"/>
        <path d="M887 367l63 123M884 386l55 108M887 371l58 121M894 363l60 121" fill="none"/>
        <path d="M884 402l4 0 49 94-4 2z" fill="#e3eaf5"/>
        <path d="M880 396l4-1 3 6-3 2-4-1z" fill="#a9c2dc"/>
        <path d="M893 362l4 2 32 69 44 86 4 2-4 4-18-34z" fill="#4b5155"/>
        <path d="M880 388l3-13 4-14 3 2-3 10z" fill="#55595e"/>
        <path d="M955 488l19 33-29-15 8-5z" fill="#6a7077"/>
        <!-- front flange -->
        <path d="M539 659L950 498l-3 7 27 17-449 176z" fill="#747b82"/>
        <path d="M541 664L947 506M944 506l30 15M949 503l25 16" fill="none"/>
        <path d="M525 697L974 521v10L526 706z" fill="url(#ff)"/>
        <path d="M526 706L974 530l3-9 0 7-8 31-450 175z" fill="#3b3e43"/>
        <path d="M539 651L948 492l4 4L541 657z" fill="#838a92"/>
        <path d="M541 656L950 495l4-12 2 7-2 12L540 663z" fill="#3a3d42"/>
        <circle cx="975" cy="522" r="2.500" fill="#55595e"/>
        <!-- left flange -->
        <path d="M430 572l7-32 81 161-7 30z" fill="#656c73"/>
        <path d="M437 541l6-4 78 157-4 8z" fill="url(#fl)"/>
        <path d="M441 538l29 5 62 119-11 33z" fill="#bfc9d3"/>
        <path d="M438 540l1-6 31-12-2 12 3 10-29-6z" fill="#757c83"/>
        <path d="M439 535l6 5M444 534l26 4M442 537l29 7" fill="none"/>
        <path d="M467 534l4-11 67 129-6 8-61-116z" fill="#656c73"/>
        <path d="M468 531l3-8 68 128-6 2z" fill="#858c94"/>
        <path d="M531 659l6-6 1 4-13 35-4 11-8 27-2 1 6-30z" fill="#4b5055"/>
        <path d="M540 651l-14 44-7 39-2-2 5-38z" fill="#858c94"/>
        <circle cx="440" cy="537" r="2.500" fill="#656b72"/>
      </g>
      <g class="tol"><text x="1384" y="775">X.X+-0.1</text><text x="1384" y="787">X.XX+-0.01</text><text x="1384" y="799">X.XXX+-0.001</text><text x="1384" y="811">ANG.+-0.5</text></g>
    </svg>
  </section>
</main>

<footer class="foot d-flex align-items-center flex-shrink-0">
  <button class="tog on d-flex align-items-center justify-content-center me-1" aria-label="Toggle tree"><svg width="16" height="20"><use href="#tree"/></svg></button>
  <button class="tog d-flex align-items-center justify-content-center me-2" aria-label="Toggle browser"><svg width="18" height="18"><use href="#globe"/></svg></button>
  <i class="vr-line me-1"></i>
  <svg class="ms-1 me-2" width="5" height="5" viewBox="0 0 5 5"><circle cx="2.500" cy="2.500" r="2.500" fill="#17607f"/></svg>
  <span class="msg">Shaded with edges model will be displayed</span>
  <div class="tools d-flex align-items-center ms-auto">
    <i class="vr-line"></i>
    <button aria-label="Refit"><svg width="16" height="16"><use href="#zfit"/></svg></button>
    <button aria-label="Zoom in"><svg width="16" height="16"><use href="#zin"/></svg></button>
    <button aria-label="Zoom out"><svg width="16" height="16"><use href="#zout"/></svg></button>
    <button aria-label="Repaint"><svg width="16" height="16"><use href="#paint"/></svg></button>
    <button class="d-flex align-items-center drop" aria-label="Display style"><svg width="16" height="16"><use href="#cube"/></svg><i class="dn"></i></button>
    <button class="d-flex align-items-center drop" aria-label="Saved views"><svg width="16" height="16"><use href="#cubes"/></svg><i class="dn"></i></button>
    <button aria-label="View manager"><svg width="16" height="16"><use href="#cam"/></svg></button>
    <button class="d-flex align-items-center drop" aria-label="Datum display"><svg width="16" height="16"><use href="#datum"/></svg><i class="dn"></i></button>
    <button aria-label="Spin center"><svg width="16" height="16"><use href="#spin"/></svg></button>
    <button class="d-flex align-items-center drop" aria-label="Annotation display"><svg width="16" height="16"><use href="#anno"/></svg><i class="dn"></i></button>
    <button aria-label="Flat pattern preview"><svg width="16" height="16"><use href="#fpv"/></svg></button>
  </div>
  <i class="vr-line ms-1"></i>
  <button class="ms-1 me-4" aria-label="Offset view"><svg width="16" height="16"><use href="#offs"/></svg></button>
  <i class="vr-line mx-1"></i>
  <svg width="28" height="12" viewBox="0 0 28 12"><circle cx="6" cy="6" r="5.500" fill="#4bcf4b"/><circle cx="16" cy="6" r="3" fill="#c8c8c8"/><circle cx="23" cy="6" r="3" fill="#c8c8c8"/></svg>
  <i class="vr-line mx-1"></i>
  <button class="me-4" aria-label="Notifications"><svg width="12" height="16" viewBox="0 0 12 16"><path d="M0 0h1.500v16H0zM2 0l10 4-10 3z" fill="#a9a9a9"/></svg></button>
  <i class="vr-line"></i>
  <button class="find d-flex align-items-center justify-content-center" aria-label="Find"><svg width="18" height="16"><use href="#bino"/></svg></button>
  <i class="vr-line ms-1"></i>
  <select class="form-select pick" aria-label="Selection filter"><option>Smart</option></select>
</footer>
<div class="stamp">
  <svg width="62" height="63" viewBox="0 0 62 63" fill="none"><ellipse cx="23" cy="21" rx="24" ry="13" transform="rotate(42 23 21)" stroke="#376595" stroke-width="3" opacity=".9"/><path d="M37 25c6-5 19-8 20 4 1 13-12 28-22 28-8-1-5-12 5-20" stroke="#c9596e" stroke-width="3" opacity=".85"/><path d="M34 34c-10-4-22-1-23 6s9 11 18 7" stroke="#b4bfcd" stroke-width="3"/></svg>
  <span class="stamp-cn" lang="zh">野火论坛</span>
  <span class="stamp-url">www.proewildfire.cn</span>
</div>
</div>
</body>
</html>
